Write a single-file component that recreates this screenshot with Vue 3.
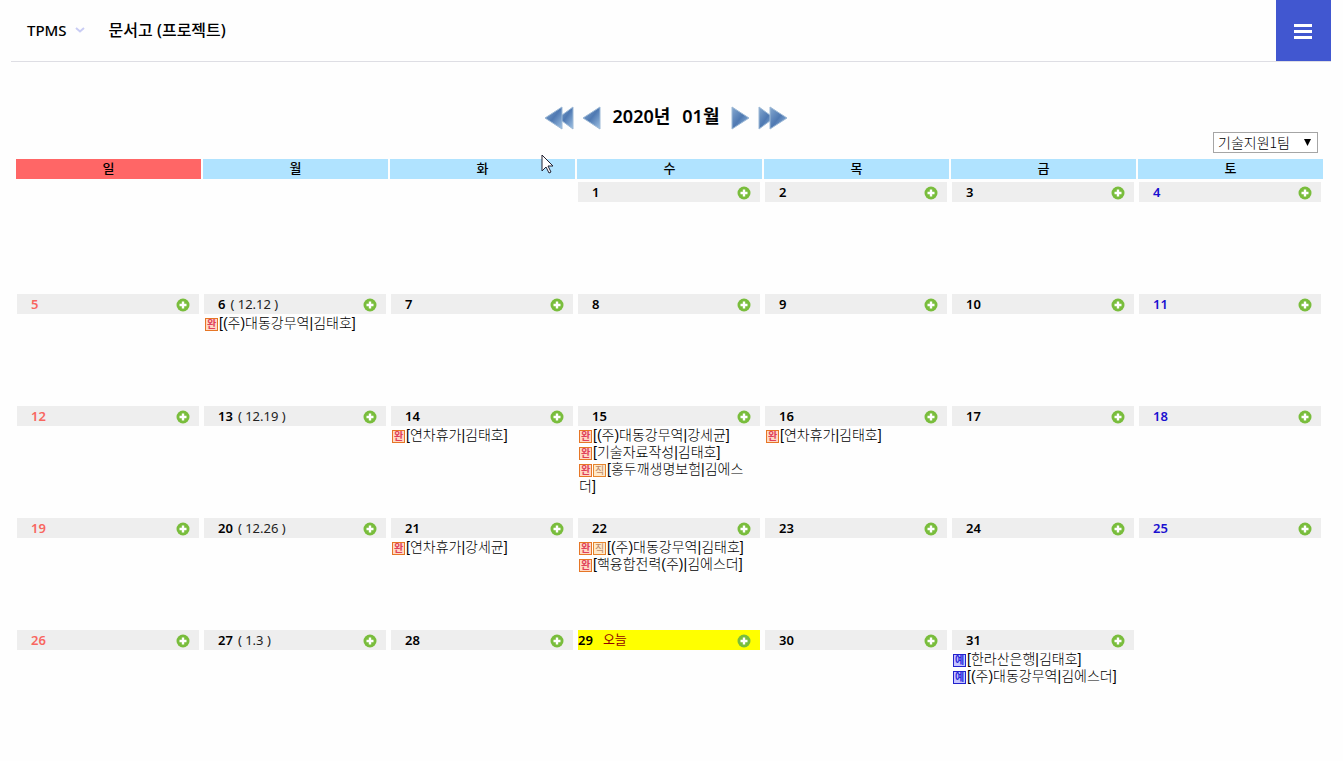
<script setup>
import { ref } from 'vue'

const team = ref('기술지원1팀')
const weekdays = ['일', '월', '화', '수', '목', '금', '토']

const notes = { 6: '12.12', 13: '12.19', 20: '12.26', 27: '1.3' }
const today = 29
const events = {
  6: [{ tags: ['완'], text: '[(주)대동강무역|김태호]' }],
  14: [{ tags: ['완'], text: '[연차휴가|김태호]' }],
  15: [
    { tags: ['완'], text: '[(주)대동강무역|강세균]' },
    { tags: ['완'], text: '[기술자료작성|김태호]' },
    { tags: ['완', '직'], text: '[홍두깨생명보험|김에스더]' }
  ],
  16: [{ tags: ['완'], text: '[연차휴가|김태호]' }],
  21: [{ tags: ['완'], text: '[연차휴가|강세균]' }],
  22: [
    { tags: ['완', '직'], text: '[(주)대동강무역|김태호]' },
    { tags: ['완'], text: '[핵융합전력(주)|김에스더]' }
  ],
  31: [
    { tags: ['예'], text: '[한라산은행|김태호]' },
    { tags: ['예'], text: '[(주)대동강무역|김에스더]' }
  ]
}
const tagClass = { 완: 'done', 직: 'direct', 예: 'planned' }

const firstWeekday = 3
const weeks = Array.from({ length: 5 }, (_, w) =>
  Array.from({ length: 7 }, (_, d) => {
    const n = w * 7 + d - firstWeekday + 1
    return n >= 1 && n <= 31 ? n : null
  })
)
</script>

<template>
  <div class="page">
    <header class="topbar">
      <nav class="menu">
        <a href="#" class="brand">TPMS
          <svg class="chevron" width="10" height="6" viewBox="0 0 10 6" aria-hidden="true">
            <path d="M1 1l4 3.5L9 1" fill="none" stroke="#c9ccf4" stroke-width="2" />
          </svg>
        </a>
        <a href="#" class="archive">문서고 (프로젝트)</a>
      </nav>
      <button class="burger" aria-label="메뉴">
        <svg width="18" height="15" viewBox="0 0 18 15" aria-hidden="true">
          <path d="M0 1.5h18M0 7.5h18M0 13.5h18" stroke="#fff" stroke-width="3" />
        </svg>
      </button>
    </header>

    <main>
      <svg width="0" height="0" class="defs" aria-hidden="true">
        <defs>
          <linearGradient id="steel" x1="0" y1="0" x2="1" y2="1">
            <stop offset="0" stop-color="#86a9d0" />
            <stop offset="0.5" stop-color="#4f79b2" />
            <stop offset="1" stop-color="#9fc2e4" />
          </linearGradient>
        </defs>
      </svg>
      <div class="pager">
        <button aria-label="이전 해">
          <svg width="30" height="26" viewBox="0 0 30 26">
            <path d="M29 2v22L14 13z" class="arrow" />
            <path d="M18 2v22L1 13z" class="arrow" />
          </svg>
        </button>
        <button aria-label="이전 달">
          <svg width="19" height="26" viewBox="0 0 19 26"><path d="M18 2v22L1 13z" class="arrow" /></svg>
        </button>
        <h1><span>2020년</span><span>01월</span></h1>
        <button aria-label="다음 달">
          <svg width="19" height="26" viewBox="0 0 19 26"><path d="M1 2v22l17-11z" class="arrow" /></svg>
        </button>
        <button aria-label="다음 해">
          <svg width="30" height="26" viewBox="0 0 30 26">
            <path d="M1 2v22l15-11z" class="arrow" />
            <path d="M12 2v22l17-11z" class="arrow" />
          </svg>
        </button>
      </div>

      <div class="filter">
        <div class="picker">
          <select v-model="team" aria-label="팀"><option>기술지원1팀</option></select>
          <svg width="7" height="7" viewBox="0 0 7 7" aria-hidden="true"><path d="M0 0h7L3.5 7z" fill="#000" /></svg>
        </div>
      </div>

      <table class="calendar">
        <thead>
          <tr><th v-for="(name, i) in weekdays" :key="name" :class="{ sunday: i === 0 }">{{ name }}</th></tr>
        </thead>
        <tbody>
          <tr v-for="(week, w) in weeks" :key="w">
            <td v-for="(day, d) in week" :key="d">
              <template v-if="day">
                <div class="bar" :class="{ sun: d === 0, sat: d === 6, today: day === today }">
                  <b>{{ day }}</b>
                  <span v-if="notes[day]" class="note">( {{ notes[day] }} )</span>
                  <span v-if="day === today" class="now">오늘</span>
                  <button class="add" aria-label="추가">
                    <svg width="14" height="14" viewBox="0 0 14 14" aria-hidden="true">
                      <circle cx="7" cy="7" r="6.5" fill="#79bd3c" />
                      <path d="M7 3.5v7M3.5 7h7" stroke="#fff" stroke-width="2.4" />
                    </svg>
                  </button>
                </div>
                <div v-for="(item, k) in events[day]" :key="k" class="event"><span
                  v-for="tag in item.tags" :key="tag" class="tag" :class="tagClass[tag]">{{ tag }}</span>{{ item.text }}</div>
              </template>
            </td>
          </tr>
        </tbody>
      </table>
    </main>

    <svg class="cursor" width="13" height="21" viewBox="0 0 13 21" aria-hidden="true">
      <path d="M1 1v16l4-4 3 6 2-1-3-6h5z" fill="#fff" stroke="#223" stroke-width="1" />
    </svg>
  </div>
</template>

<style>
body {
  background: #fefefe;
}
</style>

<style scoped>
.page {
  position: relative;
  font-family: "Noto Sans", "Noto Sans CJK KR", sans-serif;
  font-size: 13px;
  color: #000;
}
button {
  border: 0;
  padding: 0;
  background: none;
  font: inherit;
}
svg {
  display: block;
}
.defs {
  position: absolute;
}
.topbar {
  display: flex;
  justify-content: space-between;
  height: 61px;
  margin: 0 12px 0 11px;
  border-bottom: 1px solid #dedee4;
}
.menu {
  display: flex;
  align-items: center;
  gap: 24px;
  padding-left: 16px;
  font-size: 15px;
  font-weight: 500;
}
.menu a {
  display: flex;
  align-items: center;
  gap: 8px;
  padding-bottom: 2px;
  color: #000;
  line-height: 20px;
  text-decoration: none;
}
.menu .archive {
  font-size: 16px;
}
.burger {
  display: flex;
  align-items: center;
  justify-content: center;
  width: 55px;
  padding: 2px 1px 0 0;
  background: #4157d0;
}
.pager {
  display: flex;
  justify-content: center;
  align-items: center;
  gap: 8px;
  height: 28px;
  margin: 42px 11px 0 0;
}
h1 {
  display: flex;
  gap: 12px;
  margin: 0 4px;
  font-size: 18px;
  line-height: 24px;
  font-weight: 600;
  padding-bottom: 4px;
}
.arrow {
  fill: url(#steel);
  stroke: #9db9d6;
  stroke-width: 1;
}
.filter {
  display: flex;
  justify-content: flex-end;
  margin-right: 25px;
}
.picker {
  position: relative;
}
.picker select {
  display: block;
  appearance: none;
  width: 105px;
  height: 21px;
  padding: 0 0 0 4px;
  border: 1px solid #a5a5a5;
  border-radius: 0;
  background: #fff;
  color: #000;
  font: 300 14px/17px "Noto Sans CJK KR", sans-serif;
}
.picker svg {
  position: absolute;
  top: 7px;
  right: 7px;
  pointer-events: none;
}
.calendar {
  width: calc(100% - 32px);
  margin: 4px 18px 0 14px;
  border-collapse: separate;
  border-spacing: 2px;
  table-layout: fixed;
}
th {
  height: 20px;
  box-sizing: border-box;
  padding: 0 0 2px;
  background: #b0e3ff;
  font-size: 13px;
  line-height: 18px;
  font-weight: 500;
}
th.sunday {
  background: #ff6666;
}
td {
  height: 110px;
  padding: 1px;
  box-sizing: border-box;
  vertical-align: top;
}
.bar {
  display: flex;
  align-items: center;
  height: 20px;
  margin: 0 1px 1px 0;
  padding: 0 9px 0 14px;
  background: #eeeeee;
}
.bar b {
  font-weight: 600;
}
.bar.sun b {
  color: #f8665f;
}
.bar.sat b {
  color: #1a10d0;
}
.bar.today {
  padding-left: 0;
  background: #ffff00;
}
.note {
  margin-left: 5px;
  color: #222;
}
.now {
  margin-left: 10px;
  padding-bottom: 2px;
  color: #900000;
  line-height: 18px;
}
.add {
  margin: 2px 0 0 auto;
}
.event {
  padding: 0 4px 0 1px;
  font-family: "Liberation Sans", "Noto Sans CJK KR", sans-serif;
  font-size: 14px;
  font-weight: 300;
  line-height: 17px;
}
.tag {
  display: inline-block;
  box-sizing: border-box;
  width: 13px;
  height: 13px;
  margin-right: 1px;
  border: 1px solid;
  font-size: 10px;
  line-height: 11px;
  font-weight: 700;
  text-align: center;
  vertical-align: -3px;
  overflow: hidden;
}
.done {
  border-color: #e67626;
  background: #ffd9c4;
  color: #e0405a;
}
.direct {
  border-color: #e6852e;
  background: #ffe8c8;
  color: #c08a68;
  font-weight: 400;
}
.planned {
  border-color: #2222cc;
  background: #c4c4ff;
  color: #2a2adc;
}
.cursor {
  position: absolute;
  left: 541px;
  top: 154px;
}
</style>
